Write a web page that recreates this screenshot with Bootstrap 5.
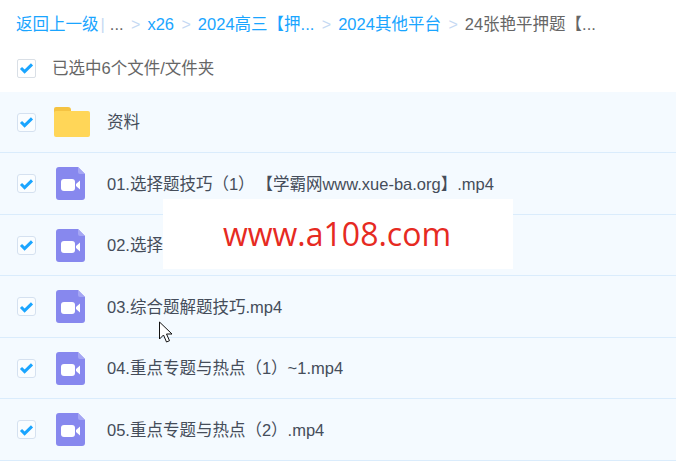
<!DOCTYPE html>
<html lang="zh">
<head>
<meta charset="utf-8">
<title>文件列表</title>
<link href="https://cdn.jsdelivr.net/npm/bootstrap@5.3.0/dist/css/bootstrap.min.css" rel="stylesheet">
<style>
html,body{height:100%;}
body{width:676px;height:468px;overflow:hidden;position:relative;background:#fff;font-family:"Liberation Sans","Noto Sans CJK SC",sans-serif;font-size:16.5px;color:#454d5a;}
.crumbs{height:46px;padding:14px 0 0 16px;white-space:nowrap;line-height:20px;}
.crumbs a{color:#1aa5ff;text-decoration:none;}
.crumbs .sep{color:#c5d9f3;margin:0 7px 0 7.5px;font-size:16px;}
.crumbs .bar{color:#c5d9f3;margin:0 5px 0 2px;}
.crumbs .dots{color:#666;}
.crumbs .cur{color:#666;}
.select-all{height:45.5px;padding-left:17px;color:#666;padding-bottom:1px;}
.fbox{width:19px;height:19px;flex:none;border:1px solid #d9dfe6;border-radius:2px;background:#fff;display:flex;align-items:center;justify-content:center;}
.frow .fbox{border-color:#d5e1f0;border-radius:3px;background:#fafdff;}
.frow{height:61.5px;padding-left:17px;padding-top:1px;background:#f4faff;border-bottom:1px solid #daecfc;}
.frow .ico{width:37px;flex:none;margin-left:18px;margin-right:16px;display:flex;}
.frow .vid{margin-left:2px;}
.frow .nm{white-space:nowrap;padding-top:1px;}
.gap-open{margin-left:10px;}
.mark-box{position:absolute;left:163px;top:199px;width:350px;height:70px;padding-right:2px;background:#fff;display:flex;align-items:center;justify-content:center;color:#e62a22;font-family:"Open Sans",sans-serif;font-size:32px;}
.cursor{position:absolute;left:158px;top:321px;}
</style>
</head>
<body>
<div class="crumbs"><a href="#">返回上一级</a><span class="bar">|</span><span class="dots">...</span><span class="sep">&gt;</span><a href="#">x26</a><span class="sep">&gt;</span><a href="#">2024高三【押...</a><span class="sep">&gt;</span><a href="#">2024其他平台</a><span class="sep">&gt;</span><span class="cur">24张艳平押题【...</span></div>
<div class="select-all d-flex align-items-center">
<span class="fbox"><svg width="15" height="12" viewBox="0 0 15 12"><path d="M2 6l3.6 3.6L13 2.4" fill="none" stroke="#1aa5ff" stroke-width="3"/></svg></span>
<span class="ms-3">已选中6个文件/文件夹</span>
</div>
<div class="frow d-flex align-items-center">
<span class="fbox"><svg width="15" height="12" viewBox="0 0 15 12"><path d="M2 6l3.6 3.6L13 2.4" fill="none" stroke="#1aa5ff" stroke-width="3"/></svg></span>
<span class="ico"><svg width="36" height="30" viewBox="0 0 36 30"><path d="M0 2a2 2 0 0 1 2-2h12a3 3 0 0 1 3 3v3H0z" fill="#f5c342"/><path d="M0 6a2 2 0 0 1 2-2h32a2 2 0 0 1 2 2v22a2 2 0 0 1-2 2H2a2 2 0 0 1-2-2z" fill="#ffd658"/></svg></span>
<span class="nm">资料</span>
</div>
<div class="frow d-flex align-items-center">
<span class="fbox"><svg width="15" height="12" viewBox="0 0 15 12"><path d="M2 6l3.6 3.6L13 2.4" fill="none" stroke="#1aa5ff" stroke-width="3"/></svg></span>
<span class="ico"><svg class="vid" width="29" height="33" viewBox="0 0 29 33"><path d="M3 0h19l7 7v23a3 3 0 0 1-3 3H3a3 3 0 0 1-3-3V3a3 3 0 0 1 3-3z" fill="#8788ee"/><path d="M22 0l7 7h-5a2 2 0 0 1-2-2z" fill="#a5a6f4"/><rect x="5" y="12" width="14" height="12" rx="3" fill="#fff"/><path d="M20 17l4-3.500v9l-4-3.500z" fill="#fff"/></svg></span>
<span class="nm">01.选择题技巧（1）<span class="gap-open">【</span>学霸网www.xue-ba.org】.mp4</span>
</div>
<div class="frow d-flex align-items-center">
<span class="fbox"><svg width="15" height="12" viewBox="0 0 15 12"><path d="M2 6l3.6 3.6L13 2.4" fill="none" stroke="#1aa5ff" stroke-width="3"/></svg></span>
<span class="ico"><svg class="vid" width="29" height="33" viewBox="0 0 29 33"><path d="M3 0h19l7 7v23a3 3 0 0 1-3 3H3a3 3 0 0 1-3-3V3a3 3 0 0 1 3-3z" fill="#8788ee"/><path d="M22 0l7 7h-5a2 2 0 0 1-2-2z" fill="#a5a6f4"/><rect x="5" y="12" width="14" height="12" rx="3" fill="#fff"/><path d="M20 17l4-3.500v9l-4-3.500z" fill="#fff"/></svg></span>
<span class="nm">02.选择</span>
</div>
<div class="frow d-flex align-items-center">
<span class="fbox"><svg width="15" height="12" viewBox="0 0 15 12"><path d="M2 6l3.6 3.6L13 2.4" fill="none" stroke="#1aa5ff" stroke-width="3"/></svg></span>
<span class="ico"><svg class="vid" width="29" height="33" viewBox="0 0 29 33"><path d="M3 0h19l7 7v23a3 3 0 0 1-3 3H3a3 3 0 0 1-3-3V3a3 3 0 0 1 3-3z" fill="#8788ee"/><path d="M22 0l7 7h-5a2 2 0 0 1-2-2z" fill="#a5a6f4"/><rect x="5" y="12" width="14" height="12" rx="3" fill="#fff"/><path d="M20 17l4-3.500v9l-4-3.500z" fill="#fff"/></svg></span>
<span class="nm">03.综合题解题技巧.mp4</span>
</div>
<div class="frow d-flex align-items-center">
<span class="fbox"><svg width="15" height="12" viewBox="0 0 15 12"><path d="M2 6l3.6 3.6L13 2.4" fill="none" stroke="#1aa5ff" stroke-width="3"/></svg></span>
<span class="ico"><svg class="vid" width="29" height="33" viewBox="0 0 29 33"><path d="M3 0h19l7 7v23a3 3 0 0 1-3 3H3a3 3 0 0 1-3-3V3a3 3 0 0 1 3-3z" fill="#8788ee"/><path d="M22 0l7 7h-5a2 2 0 0 1-2-2z" fill="#a5a6f4"/><rect x="5" y="12" width="14" height="12" rx="3" fill="#fff"/><path d="M20 17l4-3.500v9l-4-3.500z" fill="#fff"/></svg></span>
<span class="nm">04.重点专题与热点（1）~1.mp4</span>
</div>
<div class="frow d-flex align-items-center">
<span class="fbox"><svg width="15" height="12" viewBox="0 0 15 12"><path d="M2 6l3.6 3.6L13 2.4" fill="none" stroke="#1aa5ff" stroke-width="3"/></svg></span>
<span class="ico"><svg class="vid" width="29" height="33" viewBox="0 0 29 33"><path d="M3 0h19l7 7v23a3 3 0 0 1-3 3H3a3 3 0 0 1-3-3V3a3 3 0 0 1 3-3z" fill="#8788ee"/><path d="M22 0l7 7h-5a2 2 0 0 1-2-2z" fill="#a5a6f4"/><rect x="5" y="12" width="14" height="12" rx="3" fill="#fff"/><path d="M20 17l4-3.500v9l-4-3.500z" fill="#fff"/></svg></span>
<span class="nm">05.重点专题与热点（2）.mp4</span>
</div>
<div class="mark-box">www.a108.com</div>
<svg class="cursor" width="15" height="23" viewBox="0 0 15 23"><path d="M1.500 1v17l4-4 3 7 3-1.300-3-6.700h5.500z" fill="#fff" stroke="#111" stroke-width="1"/></svg>
<script src="https://cdn.jsdelivr.net/npm/bootstrap@5.3.0/dist/js/bootstrap.bundle.min.js"></script>
</body>
</html>
